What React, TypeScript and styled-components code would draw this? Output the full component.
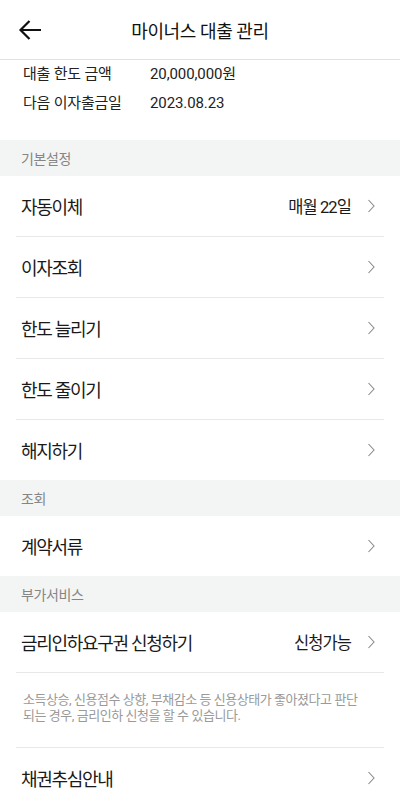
import styled, { createGlobalStyle } from "styled-components";

const GlobalStyle = createGlobalStyle`
  html, body {
    margin: 0;
    padding: 0;
    background: #fff;
  }
  body {
    font-family: Roboto, "Noto Sans CJK KR", sans-serif;
    color: #1a1a1a;
  }
`;

const Page = styled.div`
  width: 400px;
  height: 805px;
  overflow: hidden;
  background: #fff;
`;

const Header = styled.header`
  height: 60px;
  display: flex;
  align-items: center;
  justify-content: center;
  position: relative;
  border-bottom: 1px solid #e2e2e2;
  box-sizing: border-box;
`;

const BackButton = styled.button`
  position: absolute;
  left: 17px;
  top: 18px;
  width: 26px;
  height: 24px;
  padding: 0;
  border: 0;
  background: none;
  display: flex;
  align-items: center;
  justify-content: center;
`;

const Title = styled.h1`
  margin: 0;
  font-size: 18px;
  font-weight: 400;
  letter-spacing: -0.4px;
  color: #111;
`;

const Summary = styled.dl`
  margin: 0;
  padding: 0 23px 22px;
  display: grid;
  grid-template-columns: 127px 1fr;
`;

const Term = styled.dt`
  font-size: 15px;
  line-height: 29px;
  letter-spacing: -0.2px;
  color: #222;
`;

const Value = styled.dd`
  margin: 0;
  font-size: 15px;
  line-height: 29px;
  letter-spacing: -0.1px;
  color: #222;
`;

const SectionLabel = styled.div`
  height: 36px;
  background: #f3f4f4;
  display: flex;
  align-items: center;
  padding: 0 21px;
  font-size: 14px;
  letter-spacing: -0.4px;
  color: #858585;
`;

const List = styled.ul`
  margin: 0;
  padding: 0 16px;
  list-style: none;
`;

const Row = styled.li<{ $last?: boolean }>`
  height: 60px;
  display: flex;
  align-items: center;
  padding: 0 9px 0 5px;
  border-bottom: ${(p) => (p.$last ? "0" : "1px solid #e8e8e8")};
`;

const Label = styled.span`
  flex: 1;
  font-size: 18px;
  letter-spacing: -1.3px;
  color: #1a1a1a;
`;

const Extra = styled.span`
  font-size: 16.5px;
  letter-spacing: -0.9px;
  color: #1a1a1a;
  margin-right: 16px;
`;

const Note = styled.li`
  padding: 19px 7px 23px;
  font-size: 13px;
  line-height: 16px;
  letter-spacing: -0.45px;
  color: #9a9a9a;
  border-bottom: 1px solid #e8e8e8;
  white-space: nowrap;
`;

function Chevron() {
  return (
    <svg width="8" height="14" viewBox="0 0 8 14" fill="none">
      <path d="M1.5 1 L7 7 L1.5 13" stroke="#8a8a8a" strokeWidth="1.1" />
    </svg>
  );
}

function BackArrow() {
  return (
    <svg width="24" height="22" viewBox="0 0 24 22" fill="none">
      <path
        d="M23 11 H2.5 M11.5 2 L2.5 11 L11.5 20"
        stroke="#111"
        strokeWidth="2.2"
      />
    </svg>
  );
}

type Item = { label: string; extra?: string };

const basic: Item[] = [
  { label: "자동이체", extra: "매월 22일" },
  { label: "이자조회" },
  { label: "한도 늘리기" },
  { label: "한도 줄이기" },
  { label: "해지하기" },
];

function MenuRow({ item, last }: { item: Item; last?: boolean }) {
  return (
    <Row $last={last}>
      <Label>{item.label}</Label>
      {item.extra && <Extra>{item.extra}</Extra>}
      <Chevron />
    </Row>
  );
}

export default function App() {
  return (
    <Page>
      <GlobalStyle />
      <Header>
        <BackButton aria-label="뒤로">
          <BackArrow />
        </BackButton>
        <Title>마이너스 대출 관리</Title>
      </Header>
      <Summary>
        <Term>대출 한도 금액</Term>
        <Value>20,000,000원</Value>
        <Term>다음 이자출금일</Term>
        <Value>2023.08.23</Value>
      </Summary>

      <SectionLabel>기본설정</SectionLabel>
      <List>
        {basic.map((item, i) => (
          <MenuRow key={item.label} item={item} last={i === basic.length - 1} />
        ))}
      </List>

      <SectionLabel>조회</SectionLabel>
      <List>
        <MenuRow item={{ label: "계약서류" }} last />
      </List>

      <SectionLabel>부가서비스</SectionLabel>
      <List>
        <MenuRow item={{ label: "금리인하요구권 신청하기", extra: "신청가능" }} />
        <Note>
          소득상승, 신용점수 상향, 부채감소 등 신용상태가 좋아졌다고 판단
          <br />
          되는 경우, 금리인하 신청을 할 수 있습니다.
        </Note>
        <MenuRow item={{ label: "채권추심안내" }} last />
      </List>
    </Page>
  );
}
